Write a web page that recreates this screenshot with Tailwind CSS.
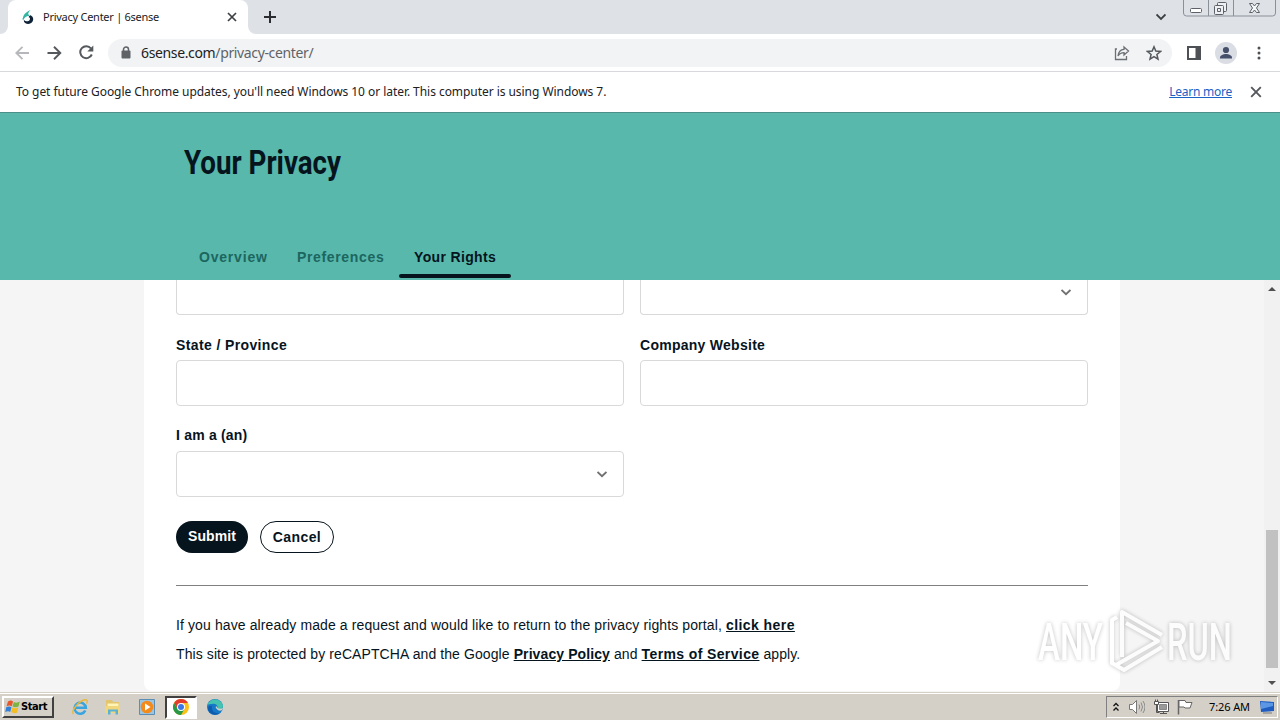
<!DOCTYPE html>
<html lang="en">
<head>
  <meta charset="UTF-8">
  <meta name="viewport" content="width=device-width, initial-scale=1.0">
  <title>Privacy Center | 6sense</title>
  <script src="https://cdn.jsdelivr.net/npm/@tailwindcss/browser@4"></script>
</head>
<body class="h-screen overflow-hidden bg-white font-['Noto_Sans',sans-serif] text-[#202124]">
  <div class="relative flex h-[720px] w-[1280px] flex-col overflow-hidden">

    <!-- Tab strip -->
    <div class="flex h-[34px] shrink-0 items-start bg-[#dee1e6]">
      <div class="flex h-full w-2 bg-white"><span class="h-full w-full rounded-br-lg bg-[#dee1e6]"></span></div>
      <div class="flex h-full w-[240px] items-center rounded-t-lg bg-white pl-[14px] pr-[10px]">
        <svg class="h-4 w-3" viewBox="0 0 12 16">
          <path d="M8.500 1C4 3 .5 6 1 10.500 2.500 8 4.500 7 6.500 6.800 5.500 5 6.500 3 8.500 1z" fill="#35b5a4"/>
          <path d="M1 10.500C2 7.500 4.500 6 7 6.300" fill="none" stroke="#35b5a4" stroke-width="1.500"/>
          <path d="M8 6.300c3 .7 4 3.700 2.700 6-1.500 2.700-5 3.300-7.200 2C2.200 13.500 1.500 12 2 11c1.500 1.800 4.500 1.600 5.500.3C8.500 10 8 8.500 6.500 8z" fill="#0f2238"/>
        </svg>
        <span class="ml-[9px] whitespace-nowrap text-[11px] leading-4 tracking-[-0.26px]">Privacy Center | 6sense</span>
        <svg class="ml-auto h-3 w-3" viewBox="0 0 12 12" stroke="#3c4043" stroke-width="1.700"><path d="M2 2l8 8M10 2l-8 8"/></svg>
      </div>
      <div class="flex h-full w-2 bg-white"><span class="h-full w-full rounded-bl-lg bg-[#dee1e6]"></span></div>
      <svg class="ml-2 mt-[11px] h-3 w-3" viewBox="0 0 12 12" stroke="#2b2c30" stroke-width="2"><path d="M6 0v12M0 6h12"/></svg>
      <svg class="ml-auto mt-[13px] h-2 w-[10px]" viewBox="0 0 10 8" fill="none" stroke="#3c4043" stroke-width="1.800"><path d="M.5 1.500L5 6l4.500-4.500"/></svg>
      <svg class="ml-[17px] mr-1 h-[17px] w-[93px]" viewBox="0 0 93 17" fill="none" stroke="#8b8f98">
        <path d="M.5 0v13q0 3 3 3h86q3 0 3-3V0M25.500 0v16M50.500 0v16"/>
        <rect x="7.500" y="8.500" width="11" height="4" rx="1" fill="#fff" stroke="#5c6068"/>
        <g stroke="#5c6068" fill="#eef0f3"><rect x="34.500" y="2.500" width="9" height="9" rx="1"/><rect x="31.500" y="5.500" width="9" height="9" rx="1"/><path d="M34.500 8.500h3v3h-3z"/></g>
        <path d="M66.500 3.500h3l2 2.500 2-2.500h3l-3 4.500 3 4.500h-3l-2-2.500-2 2.500h-3l3-4.500z" fill="#f5f6f8" stroke="#5c6068"/>
      </svg>
    </div>

    <!-- Toolbar -->
    <div class="flex h-[38px] shrink-0 items-center border-b border-[#d7d9dc] bg-white">
      <svg class="ml-[15px] h-4 w-[15px]" viewBox="0 0 15 16" fill="none" stroke="#b5b7ba" stroke-width="1.800"><path d="M14 8H1.500M7.500 1.800L1.300 8l6.200 6.200"/></svg>
      <svg class="ml-4 h-4 w-[16px]" viewBox="0 0 16 16" fill="none" stroke="#55585c" stroke-width="1.900"><path d="M1.500 8h13M8 1.800L14.300 8 8 14.200"/></svg>
      <svg class="ml-[17px] h-[15px] w-[15px]" viewBox="0 0 15 15"><path d="M12.800 9.500A6 6 0 1 1 12 3.500" fill="none" stroke="#55585c" stroke-width="2"/><path d="M14.300.5v6h-6z" fill="#55585c"/></svg>
      <div class="ml-[14px] flex h-7 w-[1064px] items-center rounded-full bg-[#f1f3f4] pl-[13px] pr-[10px]">
        <svg class="h-[13px] w-[10px]" viewBox="0 0 10 13"><path d="M2.500 6V3.500a2.500 2.500 0 0 1 5 0V6" fill="none" stroke="#5f6368" stroke-width="1.500"/><rect x=".5" y="4.500" width="9" height="8" rx="1" fill="#5f6368"/></svg>
        <span class="ml-[10px] whitespace-nowrap text-[14px] tracking-[-0.36px] text-[#5f6368]"><span class="text-[#202124]">6sense.com</span>/privacy-center/</span>
        <svg class="ml-auto h-4 w-4" viewBox="0 0 16 16" fill="none" stroke="#6c7075" stroke-width="1.300"><path d="M3 4H1.500v10.500h11V11M10 2l4.500 4L10 10V7.700C7 7.700 5.300 8.800 4 11c.4-4 2.500-6.500 6-6.700z"/></svg>
        <svg class="ml-4 h-4 w-4" viewBox="0 0 16 16" fill="none" stroke="#55585c" stroke-width="1.500"><path d="M8 1.800l1.800 4.300 4.700.4-3.600 3 1.100 4.600L8 11.600l-4 2.500 1.100-4.600-3.600-3 4.700-.4z"/></svg>
      </div>
      <svg class="ml-[15px] h-[14px] w-[14px]" viewBox="0 0 14 14"><path d="M0 0h14v14H0zM2 2v10h6.500V2z" fill="#4d5055" fill-rule="evenodd"/></svg>
      <svg class="ml-[14px] h-[22px] w-[22px]" viewBox="0 0 22 22"><circle cx="11" cy="11" r="11" fill="#dadde3"/><circle cx="11" cy="8" r="3.100" fill="#46506b"/><path d="M5 16.500v-1c0-2 3.500-3.500 6-3.500s6 1.500 6 3.500v1z" fill="#46506b"/></svg>
      <svg class="ml-[20px] h-[14px] w-1" viewBox="0 0 4 14" fill="#4d5055"><circle cx="2" cy="2" r="1.500"/><circle cx="2" cy="7" r="1.500"/><circle cx="2" cy="12" r="1.500"/></svg>
    </div>

    <!-- Update notice -->
    <div class="flex h-10 shrink-0 items-center bg-white px-4 text-[12px]">
      <span class="whitespace-nowrap tracking-[-0.05px]">To get future Google Chrome updates, you'll need Windows 10 or later. This computer is using Windows 7.</span>
      <a href="#" class="ml-auto whitespace-nowrap tracking-[-0.24px] text-[#1a62c5] underline">Learn more</a>
      <svg class="ml-[18px] mr-[2px] h-3 w-3" viewBox="0 0 12 12" stroke="#55585c" stroke-width="1.900"><path d="M1.200 1.200l9.600 9.600M10.800 1.200l-9.600 9.600"/></svg>
    </div>

    <!-- Page header -->
    <header class="flex h-[168px] shrink-0 flex-col border-t border-[#4c8f88] bg-[#58b8ac] font-['Liberation_Sans',sans-serif] text-[#06141d]">
      <svg class="ml-[184px] mt-[30px] h-10 w-[240px] shrink-0 overflow-visible" viewBox="0 0 240 40"><text x="0" y="31" textLength="157" lengthAdjust="spacingAndGlyphs" font-family="Roboto, sans-serif" font-size="33" font-weight="700" fill="#06141d">Your Privacy</text></svg>
      <nav class="ml-[184px] mt-auto flex h-[46px] items-center text-[14px] font-bold">
        <a href="#" class="w-[98px] pl-[15px] tracking-[0.8px] text-[#1c665f]">Overview</a>
        <a href="#" class="w-[117px] pl-[15px] tracking-[0.65px] text-[#1c665f]">Preferences</a>
        <a href="#" class="flex h-full w-[112px] flex-col justify-between pt-[13px]"><span class="pl-[15px] tracking-[0.35px]">Your Rights</span><span class="mb-[2px] h-1 rounded-sm bg-[#06141d]"></span></a>
      </nav>
    </header>

    <!-- Form -->
    <div class="flex h-[413px] shrink-0 bg-[#f5f5f5] font-['Liberation_Sans',sans-serif] text-[#06141d]">
      <main class="ml-36 h-[411px] w-[976px] rounded-b-lg bg-white px-8 text-[14px]">
        <div class="grid grid-cols-2 gap-x-4">
          <div class="h-[35px] rounded-b border border-t-0 border-[#d9d9d9]"></div>
          <div class="flex h-[35px] justify-end rounded-b border border-t-0 border-[#d9d9d9] pr-4">
            <svg class="mt-[9px] h-[7px] w-[10px]" viewBox="0 0 10 7" fill="none" stroke="#707070" stroke-width="1.900"><path d="M.5 1l4.500 4.200L9.500 1"/></svg>
          </div>
          <div class="pt-[21px]">
            <label class="block h-[24px] font-bold leading-[19px] tracking-[0.38px]">State / Province</label>
            <div class="h-[46px] rounded border border-[#d9d9d9]"></div>
          </div>
          <div class="pt-[21px]">
            <label class="block h-[24px] font-bold leading-[19px] tracking-[0.27px]">Company Website</label>
            <div class="h-[46px] rounded border border-[#d9d9d9]"></div>
          </div>
          <div class="pt-5">
            <label class="block h-[25px] font-bold leading-[19px] tracking-[0.2px]">I am a (an)</label>
            <div class="flex h-[46px] items-center justify-end rounded border border-[#d9d9d9] pr-4">
              <svg class="h-[7px] w-[10px]" viewBox="0 0 10 7" fill="none" stroke="#707070" stroke-width="1.900"><path d="M.5 1l4.500 4.200L9.500 1"/></svg>
            </div>
          </div>
        </div>
        <div class="mt-6 flex gap-3 font-bold">
          <button class="h-8 w-[72px] rounded-full bg-[#06141d] pb-px tracking-[0.1px] text-white">Submit</button>
          <button class="h-8 w-[74px] rounded-full border border-[#06141d] tracking-[0.4px]">Cancel</button>
        </div>
        <hr class="mt-8 border-[#808080]">
        <p class="mt-[25px] whitespace-nowrap leading-[29px] tracking-[0.11px]">If you have already made a request and would like to return to the privacy rights portal, <a href="#" class="font-bold tracking-[0.43px] underline">click here</a></p>
        <p class="whitespace-nowrap leading-[29px] tracking-[0.09px]">This site is protected by reCAPTCHA and the Google <a href="#" class="font-bold tracking-[0.1px] underline">Privacy Policy</a> and <a href="#" class="font-bold tracking-[0.38px] underline">Terms of Service</a> apply.</p>
      </main>
      <div class="ml-auto flex w-4 flex-col items-center bg-[#f1f1f1]">
        <svg class="mt-[7px] h-1 w-2" viewBox="0 0 8 4"><path d="M0 4h8L4 0z" fill="#505050"/></svg>
        <div class="mt-auto h-[138px] w-3 bg-[#c1c1c1]"></div>
        <svg class="mb-[8px] mt-[13px] h-1 w-2" viewBox="0 0 8 4"><path d="M0 0h8L4 4z" fill="#505050"/></svg>
      </div>
    </div>

    <!-- Taskbar -->
    <div class="flex h-[27px] shrink-0 items-center border-t border-white bg-[#d4d0c8] text-[11px] text-black shadow-[0_-1px_0_#d4d0c8]">
      <div class="ml-[2px] flex h-[22px] w-[52px] items-center border-2 border-b-[#404040] border-l-white border-r-[#404040] border-t-white pl-px">
        <svg class="h-4 w-4 shrink-0" viewBox="0 0 16 16"><path d="M3 2.500q3-2 5 0L6.800 7.300q-2.500-1.500-5.300 0z" fill="#e8562a"/><path d="M8.800 3q3 1.500 6-.5L13.500 7.500q-3 1.500-6 0z" fill="#7cb342"/><path d="M1.200 8.300q3-1.500 5.300 0L5.200 13q-2-1.500-5 0z" fill="#2f80d6"/><path d="M7.300 8.500q3 1.500 6 0l-1.200 5q-3 1.500-6-.5z" fill="#f5bd24"/></svg>
        <span class="font-['DejaVu_Sans_Condensed','DejaVu_Sans',sans-serif] text-[11px] font-bold tracking-[-0.4px]">Start</span>
      </div>
      <svg class="ml-[17px] h-[18px] w-[18px]" viewBox="0 0 18 18" fill="none"><path d="M14.300 12.500A5.600 5.600 0 1 1 14.800 9.700H4.500" stroke="#39a5de" stroke-width="2.600"/><path d="M2.500 16.200C-.8 14 7 3.200 14 1.800c3-.3 2.500 2.200 1.500 3.700" stroke="#e8b73b" stroke-width="1.400"/></svg>
      <svg class="ml-[15px] h-[18px] w-[18px]" viewBox="0 0 18 18"><path d="M2 2h6l1 2h6v11H2z" fill="#e2c56c"/><path d="M3.500 5.500h11V10h-11z" fill="#fff3b8"/><path d="M1 8h15v7H1z" fill="#f1d67c"/><path d="M4 16.500v-5h10v5h-2.500v-3h-5v3z" fill="#5ab1d6"/></svg>
      <svg class="ml-4 h-[18px] w-[18px]" viewBox="0 0 18 18"><path d="M1.500 1.500h15v15h-15z" fill="#9cc5e2" stroke="#5c8eb5"/><circle cx="9" cy="9" r="6.300" fill="#f28a1c"/><path d="M7 5.500l5.500 3.500L7 12.500z" fill="#fff"/></svg>
      <div class="ml-[9px] flex h-[23px] w-[32px] items-center justify-center border-2 border-b-white border-l-[#404040] border-r-white border-t-[#404040] bg-white">
        <svg class="h-4 w-4 shrink-0" viewBox="0 0 16 16"><circle cx="8" cy="8" r="8" fill="#fbc116"/><path d="M1.070 4A8 8 0 0 1 14.930 4H8L4.540 10z" fill="#e33b2e"/><path d="M1.070 4A8 8 0 0 0 8 16l3.460-6H4.540z" fill="#279847"/><circle cx="8" cy="8" r="4" fill="#fff"/><circle cx="8" cy="8" r="3" fill="#3b78e7"/></svg>
      </div>
      <svg class="ml-[10px] h-4 w-4" viewBox="0 0 16 16"><circle cx="8" cy="8" r="8" fill="#1679c7"/><path d="M.5 6C3-2 15-1 16 7c0 3-3 4-6 3 2-3-1-6-5-5-2 0-3.500 0-4.500 1z" fill="#45c3b0"/><path d="M5 7c-1 5 3 8 8 7-4 3-11 2-12-4 0-3 2-4 4-3z" fill="#0f5cae"/><path d="M10 10c-2-1-1-2-1-3 2 2 2 4 7 2-1 4-5 3-6 1z" fill="#d4d0c8"/></svg>
      <div class="ml-auto mr-[2px] flex h-[22px] w-[172px] items-center border border-b-white border-l-[#808080] border-r-white border-t-[#808080]">
        <svg class="ml-[6px] h-[10px] w-[6px]" viewBox="0 0 6 10" fill="none" stroke="#111" stroke-width="1.300"><path d="M.5 4L3 1.500 5.500 4M.5 8.500L3 6l2.500 2.500"/></svg>
        <svg class="ml-[10px] h-4 w-4" viewBox="0 0 16 16" fill="none" stroke="#777"><path d="M.5 5.500h3l4-4v13l-4-4h-3z" fill="#fff"/><path d="M10 5.500q1.500 2.500 0 5M12 3.500q3 4.500 0 9M14 2q4 6 0 12" stroke="#8a8a8a"/></svg>
        <svg class="ml-2 h-4 w-4" viewBox="0 0 16 16" stroke="#555"><path d="M4.500 3.500h11v9h-11z" fill="#fff"/><path d="M6.500 5.500h7v5h-7z" fill="#999" stroke="#888"/><path d="M7 14.500h7M10.500 12.500v2M3.500 6v7.500h3" fill="none"/><path d="M1.500 2.500h4v3h-4zM2.500.5v2M4.500.5v2" fill="#fff"/></svg>
        <svg class="ml-2 h-4 w-4" viewBox="0 0 16 16" stroke="#666"><path d="M1.500 1v14.500" stroke-width="1.500"/><path d="M2 1.500h6l1 2h6l-2 5.500H8l-1-1H2z" fill="#fff"/></svg>
        <span class="ml-[16px] whitespace-nowrap tracking-[-0.1px]">7:26 AM</span>
        <svg class="ml-auto mr-[2px] h-[14px] w-4" viewBox="0 0 16 14"><path d="M1 1l14 1v9L2 12z" fill="#1e5cc0"/><path d="M2 2l12 1v3L2 9z" fill="#5b97e4"/><path d="M4 13h9" stroke="#777"/></svg>
      </div>
    </div>

    <!-- Watermark -->
    <svg class="absolute left-[1030px] top-[600px] h-[84px] w-[245px] overflow-visible drop-shadow-[0_0_2px_#00000059]" viewBox="0 0 245 84" fill="#fff" opacity=".7">
      <text x="8" y="60" textLength="65" lengthAdjust="spacingAndGlyphs" font-family="Roboto, sans-serif" font-size="52" font-weight="500">ANY</text>
      <text x="137" y="60" textLength="65" lengthAdjust="spacingAndGlyphs" font-family="Roboto, sans-serif" font-size="52" font-weight="500">RUN</text>
      <path d="M87 17l-5 3v43l12 7 38-23M92 57V12l40 23M96 23l32 18-42 24" fill="none" stroke="#fff" stroke-width="4" stroke-linejoin="round"/>
    </svg>
  </div>
</body>
</html>
